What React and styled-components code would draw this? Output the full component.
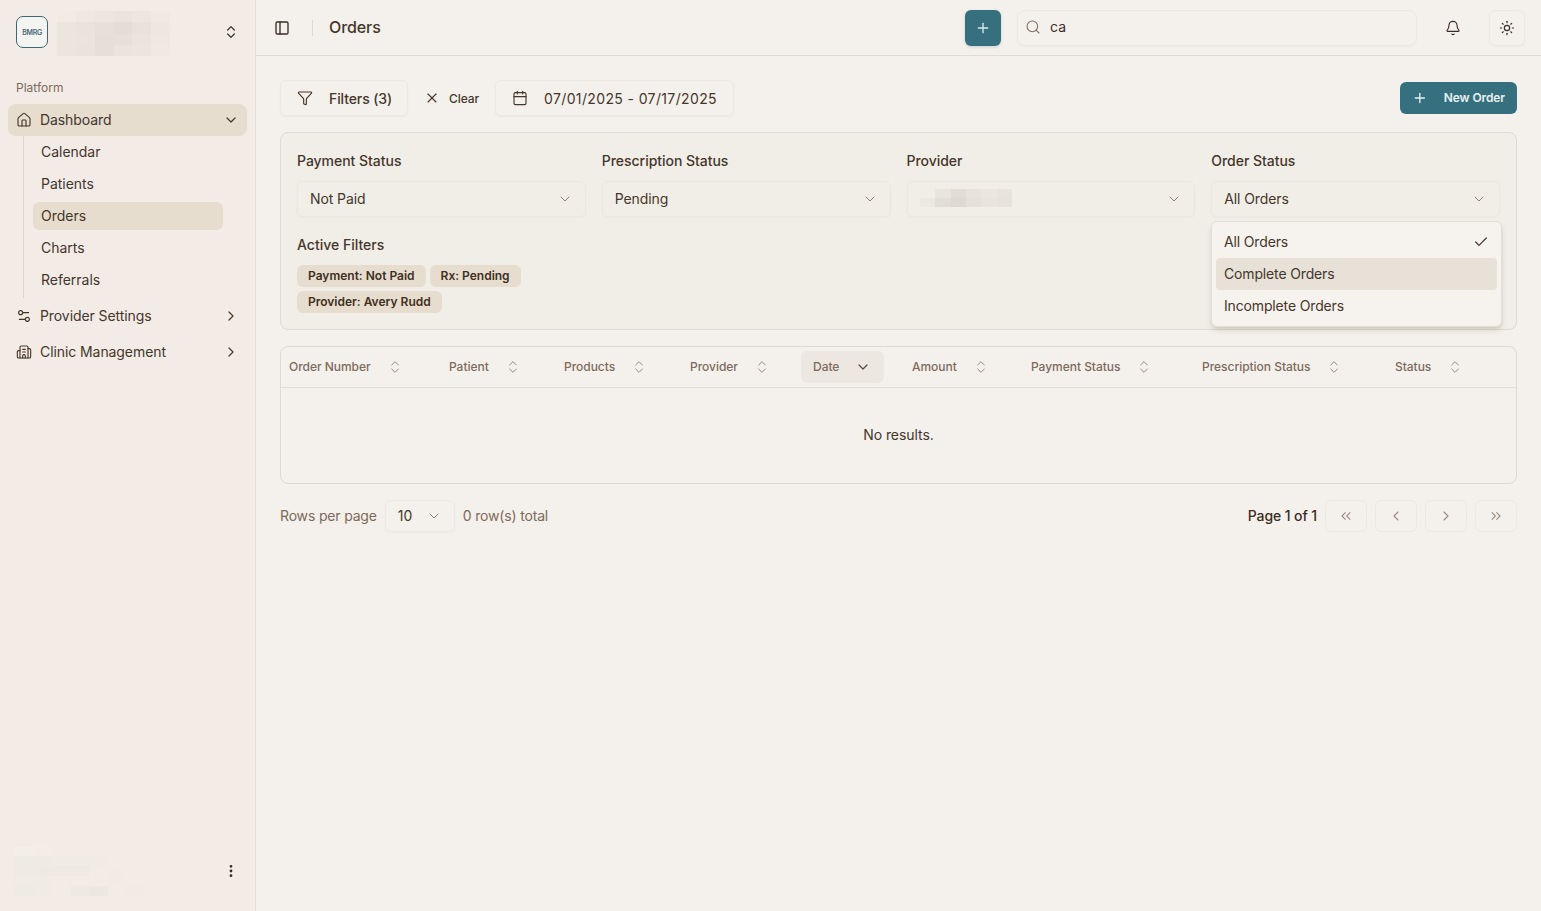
import React from 'react';
import styled, { createGlobalStyle } from 'styled-components';
import {
  House, ChevronDown, ChevronRight, ChevronsUpDown, Settings2, Building2, PanelLeft, Plus, Search, Bell, Sun,
  Funnel, X, Calendar, Check, ChevronsLeft, ChevronLeft, ChevronsRight, EllipsisVertical,
} from 'lucide-react';

const Global = createGlobalStyle`
  html, body { margin: 0; padding: 0; height: 100%; }
  body { background: #f4f1ec; color: #3a2c22; font-family: Inter, "Liberation Sans", sans-serif; font-size: 14px; }
  * { box-sizing: border-box; }
  #root { height: 100%; }
`;
const Shell = styled.div`display: flex; height: 911px; overflow: hidden;`;
const Sidebar = styled.aside`
  width: 256px; flex: none; background: #f3ece6; border-right: 1px solid #e3ded6;
  display: flex; flex-direction: column; padding: 8px;
`;
const Brand = styled.div`display: flex; align-items: center; height: 48px; padding: 0 8px; gap: 8px;`;
const BrandBlur = styled.div`margin: 3px 0 0 1px;`;
const LogoBox = styled.div`
  width: 32px; height: 32px; border-radius: 7px; border: 1px solid #3f6674; background: #f4f5f1; flex: none;
  display: flex; align-items: center; justify-content: center;
`;
const LogoText = styled.span`font-size: 7px; font-weight: 600; color: #4a6a78; letter-spacing: -0.3px;`;
const Mosaic = styled.svg`flex: none; display: block;`;
const Grow = styled.div`flex: 1;`;
const BrandChevron = styled(ChevronsUpDown)`color: #3a2c22;`;
const GroupLabel = styled.div`
  font-size: 12px; line-height: 16px; color: #7d6a5d; padding: 0 8px; margin: 24px 0 8px; height: 16px;
`;
const NavItem = styled.div`
  display: flex; align-items: center; gap: 8px; height: 32px; padding: 0 8px; margin-bottom: ${p => p.$mb || 0}px;
  border-radius: 8px; color: #45362b; background: ${p => p.$active ? '#e7ddcf' : 'transparent'};
  font-size: 14px; letter-spacing: -0.08px;
`;
const NavLabel = styled.span`flex: 1; padding-bottom: 1px;`;
const SubList = styled.div`
  margin: 0 0 0 15px; border-left: 1px solid #e0d8ce; padding: 2px 0 4px 9px; width: 200px;
  display: flex; flex-direction: column; gap: 4px;
`;
const SubItem = styled.div`
  height: 28px; display: flex; align-items: center; padding: 0 8px 1px; border-radius: 6px; color: #45362b;
  background: ${p => p.$active ? '#e7ddcf' : 'transparent'}; letter-spacing: -0.02px;
`;
const SubGap = styled.div`height: 2px; flex: none;`;
const UserRow = styled.div`display: flex; align-items: center; height: 48px; padding: 0 8px 0 7px; margin-bottom: 8px;`;

const Main = styled.main`flex: 1; min-width: 0; display: flex; flex-direction: column;`;
const Topbar = styled.header`
  height: 56px; flex: none; border-bottom: 1px solid #e0dcd5; display: flex; align-items: center; padding: 0 16px;
`;
const IconGhost = styled.div`width: 28px; height: 28px; display: flex; align-items: center; justify-content: center; margin-left: -4px; color: #3a2c22;`;
const Divider = styled.div`width: 1px; height: 16px; background: #ded9d1; margin: 0 16px;`;
const PageTitle = styled.div`font-size: 16px; font-weight: 500; color: #45362b; flex: 1; padding-bottom: 2px; letter-spacing: -0.1px;`;
const TealSquare = styled.div`
  width: 36px; height: 36px; border-radius: 6px; background: #36707f; color: #dcebec; display: flex;
  align-items: center; justify-content: center; box-shadow: 0 1px 3px rgba(54,112,127,.25); margin-right: 16px;
`;
const SearchBox = styled.div`
  width: 400px; height: 36px; border: 1px solid #ece8e2; border-radius: 8px; display: flex; align-items: center;
  gap: 9px; padding: 0 7px 1px; color: #3f3025; box-shadow: 0 1px 2px rgba(80,60,40,.04); margin-right: 18px;
`;
const SearchIcon = styled(Search)`color: #7f6d60;`;
const SearchValue = styled.span`padding-bottom: 1px;`;
const BellBtn = styled.div`width: 36px; height: 36px; display: flex; align-items: center; justify-content: center; color: #3a2c22; margin-right: 18px;`;
const SunBtn = styled.div`
  width: 36px; height: 36px; border: 1px solid #ece8e2; border-radius: 6px; display: flex; align-items: center;
  justify-content: center; color: #3a2c22; box-shadow: 0 1px 2px rgba(80,60,40,.04);
`;

const Content = styled.div`flex: 1; padding: 24px 24px 0; display: flex; flex-direction: column;`;
const Toolbar = styled.div`display: flex; align-items: center; height: 36px;`;
const OutlineBtn = styled.div`
  height: 36px; display: flex; align-items: center; border: 1px solid #ece8e2; border-radius: 6px; white-space: nowrap;
  box-shadow: 0 1px 2px rgba(80,60,40,.05); color: #45362b; font-weight: 500; padding: 0 15px 0 16px; gap: 16px; letter-spacing: -0.1px;
`;
const ClearBtn = styled.div`
  display: flex; align-items: center; gap: 9px; font-size: 12px; font-weight: 500; color: #45362b;
  padding: 0 16px; height: 36px; letter-spacing: -0.1px;
`;
const DateBtn = styled(OutlineBtn)`font-weight: 400; letter-spacing: 0.37px; width: 239px;`;
const NewOrder = styled.div`
  margin-left: auto; height: 32px; width: 117px; border-radius: 6px; background: #36707f; color: #e8f1f1; white-space: nowrap;
  display: flex; align-items: center; padding: 0 12px 1px; gap: 16px; font-size: 12px; font-weight: 600; letter-spacing: -0.1px;
`;

const FilterPanel = styled.section`
  position: relative; margin-top: 16px; border: 1px solid #dfdbd3; border-radius: 8px; background: #f1eee8;
  padding: 16px; height: 198px;
`;
const FilterGrid = styled.div`display: grid; grid-template-columns: repeat(4, 1fr); gap: 16px;`;
const Field = styled.div`display: flex; flex-direction: column; gap: 8px;`;
const FieldLabel = styled.div`line-height: 24px; font-weight: 500; color: #45362b; font-size: 14px; height: 24px; letter-spacing: -0.03px;`;
const SelectBox = styled.div`
  height: 36px; border: 1px solid #ebe7e0; border-radius: 6px; display: flex; align-items: center;
  justify-content: space-between; padding: 0 12px 2px; color: #45362b; letter-spacing: -0.1px; box-shadow: 0 1px 2px rgba(80,60,40,.03);
`;
const SelectChevron = styled(ChevronDown)`color: #8e7f73; position: relative; top: 1px;`;
const ActiveTitle = styled.div`font-weight: 500; color: #45362b; margin-top: 16px; line-height: 24px;`;
const Chips = styled.div`display: flex; flex-wrap: wrap; gap: 4px; width: 240px; margin-top: 8px;`;
const Chip = styled.span`
  height: 22px; border-radius: 6px; background: #e7ddcf; color: #3f2f22; font-size: 12px; font-weight: 600; letter-spacing: 0;
  display: inline-flex; align-items: center; padding: 0 11px 2px;
`;
const Menu = styled.div`
  position: absolute; top: 88px; right: 14px; width: 291px; height: 106px; background: #f6f2ed; border: 1px solid #e3dfd8;
  border-radius: 6px; padding: 4px; box-shadow: 0 4px 6px -1px rgba(60,40,20,.15), 0 2px 4px -2px rgba(60,40,20,.12);
  z-index: 2;
`;
const MenuItem = styled.div`
  height: 32px; display: flex; align-items: center; justify-content: space-between; padding: 0 8px 2px; border-radius: 4px; letter-spacing: -0.15px;
  color: #45362b; background: ${p => p.$hover ? '#e7e1d8' : 'transparent'};
`;
const MenuCheck = styled(Check)`position: relative; top: 1px;`;

const TableWrap = styled.section`margin-top: 16px; border: 1px solid #dfdbd3; border-radius: 8px; height: 138px;`;
const HeadRow = styled.div`
  height: 41px; border-bottom: 1px solid #e0dcd5; display: grid; align-items: center;
  grid-template-columns: 160px 115px 126px 123px 99px 119px 171px 193px 1fr;
`;
const HeadCell = styled.div`
  display: flex; align-items: center; gap: 16px; padding-left: 8px; font-size: 12px; font-weight: 500; color: #7d6a5d; letter-spacing: -0.03px; line-height: 14px;
`;
const ActiveHead = styled.div`
  display: flex; align-items: center; gap: 16px; height: 32px; width: 83px; margin-left: -12px; padding: 0 12px; border-radius: 6px; background: #ece8e1;
`;
const SortIcon = styled(ChevronsUpDown)`color: #8e7f73; flex: none;`;
const DateIcon = styled(ChevronDown)`color: #5a4a3e; flex: none;`;
const Empty = styled.div`height: 96px; display: flex; align-items: center; justify-content: center; color: #45362b; padding-bottom: 3px; letter-spacing: -0.05px;`;

const Pager = styled.div`display: flex; align-items: center; margin-top: 16px; height: 32px;`;
const Muted = styled.span`color: #7d6a5d; letter-spacing: -0.17px; padding-bottom: 2px;`;
const PageSelect = styled.div`
  width: 70px; height: 32px; margin: 0 8px; border: 1px solid #ece8e2; border-radius: 6px; display: flex; align-items: center;
  justify-content: space-between; padding: 0 12px 2px; color: #45362b; box-shadow: 0 1px 2px rgba(80,60,40,.04);
`;
const PageInfo = styled.span`margin-left: auto; margin-right: 8px; font-weight: 500; color: #3a2c22; padding-bottom: 2px; letter-spacing: -0.1px;`;
const PageBtns = styled.div`display: flex; gap: 8px;`;
const PageBtn = styled.div`
  width: 42px; height: 32px; border: 1px solid #ece8e2; border-radius: 6px; display: flex; align-items: center; justify-content: center;
  color: #9a8e84;
`;

const Mosaics = ({ cells, w, h, cols, rows }) => (
  <Mosaic width={w} height={h} viewBox={`0 0 ${cols} ${rows}`} preserveAspectRatio="none" shapeRendering="crispEdges">
    {cells.flatMap((row, y) => row.map((c, x) => c ? <rect key={`${x}-${y}`} x={x} y={y} width="1.02" height="1.02" fill={c} /> : null))}
  </Mosaic>
);
const brandCells = [
  ['#f1ebe4', '#efe8e1', '#ece6df', '#ebe3dc', '#ede6df', '#f0e9e2'],
  ['#ece5de', '#e9e3db', '#e7e0d8', '#e5ddd5', '#e9e2da', '#eee7e0'],
  ['#ece5de', '#ebe4dc', '#e6dfd7', '#e7e0d8', '#ebe4dc', '#efe8e1'],
  ['#ece5dd', '#eae3db', '#e7dfd7', '#ebe4dc', '#ece5dd', '#f0e9e2'],
];
const userCells = [
  ['#f3eee6', '#f3ede5', '#f3ece6', '#f3ece6', '#f3ece6', '#f3ece6', '#f3ece6'],
  ['#eeebe4', '#eeebe4', '#f0ebe4', '#f0ebe4', '#f2ebe5', '#f3ece6', '#f3ece6'],
  ['#efebe4', '#eeeae3', '#eeeae3', '#eeeae3', '#f2ece6', '#f2ebe5', '#f3ece6'],
  ['#f0ece5', '#f0ece5', '#f3ece6', '#f3ece6', '#f3ece6', '#f2ebe5', '#f3ece6'],
  ['#eeebe5', '#f0ece5', '#f3ece6', '#efe9e3', '#ede7e1', '#f3ece6', '#f2ebe5'],
];
const providerCells = [
  ['#f1eee8', '#e9e4de', '#e2dcd6', '#e7e2dc', '#ebe6e0', '#e8e3dd'],
  ['#ece8e2', '#e3ddd7', '#dfd9d3', '#e6e0da', '#e9e4de', '#e7e2dc'],
];

const heads = ['Order Number', 'Patient', 'Products', 'Provider', 'Date', 'Amount', 'Payment Status', 'Prescription Status', 'Status'];

export default function App() {
  return (
    <Shell>
      <Global />
      <Sidebar>
        <Brand>
          <LogoBox><LogoText>BMRG</LogoText></LogoBox>
          <BrandBlur><Mosaics cells={brandCells} w={113} h={45} cols={6} rows={4} /></BrandBlur>
          <Grow />
          <BrandChevron size={16} strokeWidth={1.8} />
        </Brand>
        <GroupLabel>Platform</GroupLabel>
        <NavItem $active>
          <House size={16} strokeWidth={1.7} />
          <NavLabel>Dashboard</NavLabel>
          <ChevronDown size={16} strokeWidth={1.8} />
        </NavItem>
        <SubList>
          <SubItem>Calendar</SubItem>
          <SubItem>Patients</SubItem>
          <SubItem $active>Orders</SubItem>
          <SubItem>Charts</SubItem>
          <SubItem>Referrals</SubItem>
        </SubList>
        <SubGap />
        <NavItem $mb={4}>
          <Settings2 size={16} strokeWidth={1.7} />
          <NavLabel>Provider Settings</NavLabel>
          <ChevronRight size={16} strokeWidth={1.8} />
        </NavItem>
        <NavItem>
          <Building2 size={16} strokeWidth={1.7} />
          <NavLabel>Clinic Management</NavLabel>
          <ChevronRight size={16} strokeWidth={1.8} />
        </NavItem>
        <Grow />
        <UserRow>
          <Mosaics cells={userCells} w={130} h={50} cols={7} rows={5} />
          <Grow />
          <EllipsisVertical size={16} strokeWidth={2.2} color="#3a2c22" />
        </UserRow>
      </Sidebar>
      <Main>
        <Topbar>
          <IconGhost><PanelLeft size={16} strokeWidth={2} /></IconGhost>
          <Divider />
          <PageTitle>Orders</PageTitle>
          <TealSquare><Plus size={16} strokeWidth={2} /></TealSquare>
          <SearchBox><SearchIcon size={16} strokeWidth={1.6} /><SearchValue>ca</SearchValue></SearchBox>
          <BellBtn><Bell size={16} strokeWidth={1.7} /></BellBtn>
          <SunBtn><Sun size={16} strokeWidth={1.7} /></SunBtn>
        </Topbar>
        <Content>
          <Toolbar>
            <OutlineBtn><Funnel size={16} strokeWidth={1.7} />Filters (3)</OutlineBtn>
            <ClearBtn><X size={16} strokeWidth={1.7} />Clear</ClearBtn>
            <DateBtn><Calendar size={16} strokeWidth={1.7} />07/01/2025 - 07/17/2025</DateBtn>
            <NewOrder><Plus size={16} strokeWidth={2} />New Order</NewOrder>
          </Toolbar>
          <FilterPanel>
            <FilterGrid>
              <Field><FieldLabel>Payment Status</FieldLabel><SelectBox>Not Paid<SelectChevron size={16} strokeWidth={1.5} /></SelectBox></Field>
              <Field><FieldLabel>Prescription Status</FieldLabel><SelectBox>Pending<SelectChevron size={16} strokeWidth={1.5} /></SelectBox></Field>
              <Field><FieldLabel>Provider</FieldLabel><SelectBox><Mosaics cells={providerCells} w={92} h={18} cols={6} rows={2} /><SelectChevron size={16} strokeWidth={1.5} /></SelectBox></Field>
              <Field><FieldLabel>Order Status</FieldLabel><SelectBox>All Orders<SelectChevron size={16} strokeWidth={1.5} /></SelectBox></Field>
            </FilterGrid>
            <ActiveTitle>Active Filters</ActiveTitle>
            <Chips>
              <Chip>Payment: Not Paid</Chip>
              <Chip>Rx: Pending</Chip>
              <Chip>Provider: Avery Rudd</Chip>
            </Chips>
            <Menu>
              <MenuItem>All Orders<MenuCheck size={16} strokeWidth={1.8} /></MenuItem>
              <MenuItem $hover>Complete Orders</MenuItem>
              <MenuItem>Incomplete Orders</MenuItem>
            </Menu>
          </FilterPanel>
          <TableWrap>
            <HeadRow>
              {heads.map(h => h === 'Date' ? (
                <HeadCell key={h}><ActiveHead>{h}<DateIcon size={16} strokeWidth={1.8} /></ActiveHead></HeadCell>
              ) : (
                <HeadCell key={h}>{h}<SortIcon size={16} strokeWidth={1.4} /></HeadCell>
              ))}
            </HeadRow>
            <Empty>No results.</Empty>
          </TableWrap>
          <Pager>
            <Muted>Rows per page</Muted>
            <PageSelect>10<SelectChevron size={16} strokeWidth={1.5} /></PageSelect>
            <Muted>0 row(s) total</Muted>
            <PageInfo>Page 1 of 1</PageInfo>
            <PageBtns>
              <PageBtn><ChevronsLeft size={16} strokeWidth={1.6} /></PageBtn>
              <PageBtn><ChevronLeft size={16} strokeWidth={1.6} /></PageBtn>
              <PageBtn><ChevronRight size={16} strokeWidth={1.6} /></PageBtn>
              <PageBtn><ChevronsRight size={16} strokeWidth={1.6} /></PageBtn>
            </PageBtns>
          </Pager>
        </Content>
      </Main>
    </Shell>
  );
}
